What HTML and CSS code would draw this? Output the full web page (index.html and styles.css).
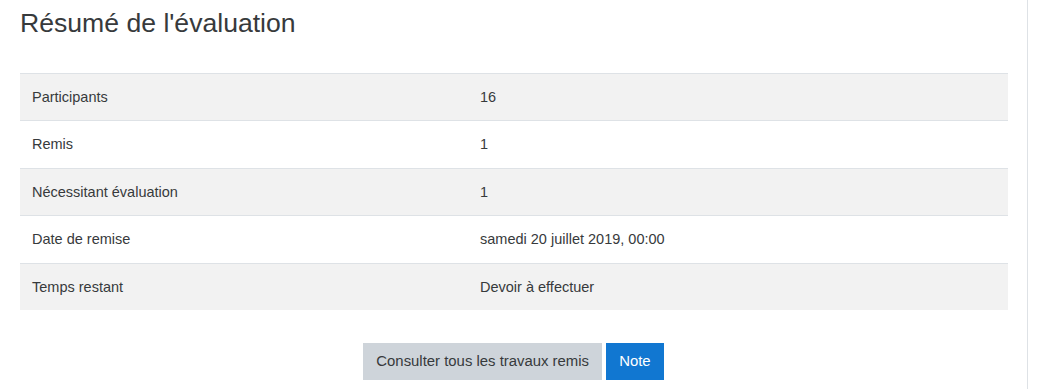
FILE: index.html
```html
<!DOCTYPE html>
<html lang="fr">
<head>
<meta charset="utf-8">
<title>Résumé de l'évaluation</title>
<link rel="stylesheet" href="styles.css">
</head>
<body>
<div class="page">
  <section class="summary">
    <h2 class="title">Résumé de l'évaluation</h2>
    <table class="grading">
      <tbody>
        <tr><td class="label">Participants</td><td>16</td></tr>
        <tr><td class="label">Remis</td><td>1</td></tr>
        <tr><td class="label">Nécessitant évaluation</td><td>1</td></tr>
        <tr><td class="label">Date de remise</td><td>samedi 20 juillet 2019, 00:00</td></tr>
        <tr><td class="label">Temps restant</td><td>Devoir à effectuer</td></tr>
      </tbody>
    </table>
    <div class="actions">
      <a class="btn btn-secondary" href="#">Consulter tous les travaux remis</a>
      <a class="btn btn-primary" href="#">Note</a>
    </div>
  </section>
</div>
</body>
</html>
```
FILE: styles.css
```css
html, body {
  margin: 0;
  padding: 0;
  background: #fff;
}
body {
  font-family: "Liberation Sans", Arial, sans-serif;
  font-size: 15px;
  line-height: 1.5;
  color: #373a3c;
}
.page {
  width: 1028px;
  min-height: 389px;
  box-sizing: border-box;
  border-right: 1px solid #dee2e6;
}
.summary {
  padding: 0 20px;
}
.title {
  margin: 0;
  padding-top: 8px;
  font-size: 26.6px;
  font-weight: 400;
  line-height: 1.2;
  color: #373a3c;
  margin-bottom: 33px;
}
.grading {
  width: 988px;
  border-collapse: collapse;
  margin-bottom: 33px;
  font-size: 14.5px;
  line-height: 22.5px;
}
.grading td {
  padding: 12px;
  border-top: 1px solid #dee2e6;
  vertical-align: top;
}
.grading td.label {
  width: 424px;
}
.grading tr:nth-child(odd) {
  background: #f2f2f2;
}
.actions {
  text-align: center;
}
.btn {
  display: inline-block;
  padding: 6px 12px;
  border: 1px solid transparent;
  font-size: 14.9px;
  line-height: 22.5px;
  text-decoration: none;
  vertical-align: middle;
}
.btn-secondary {
  background: #ced4da;
  border-color: #ced4da;
  color: #373a3c;
}
.btn-primary {
  background: #1177d1;
  border-color: #1177d1;
  color: #fff;
}
```
